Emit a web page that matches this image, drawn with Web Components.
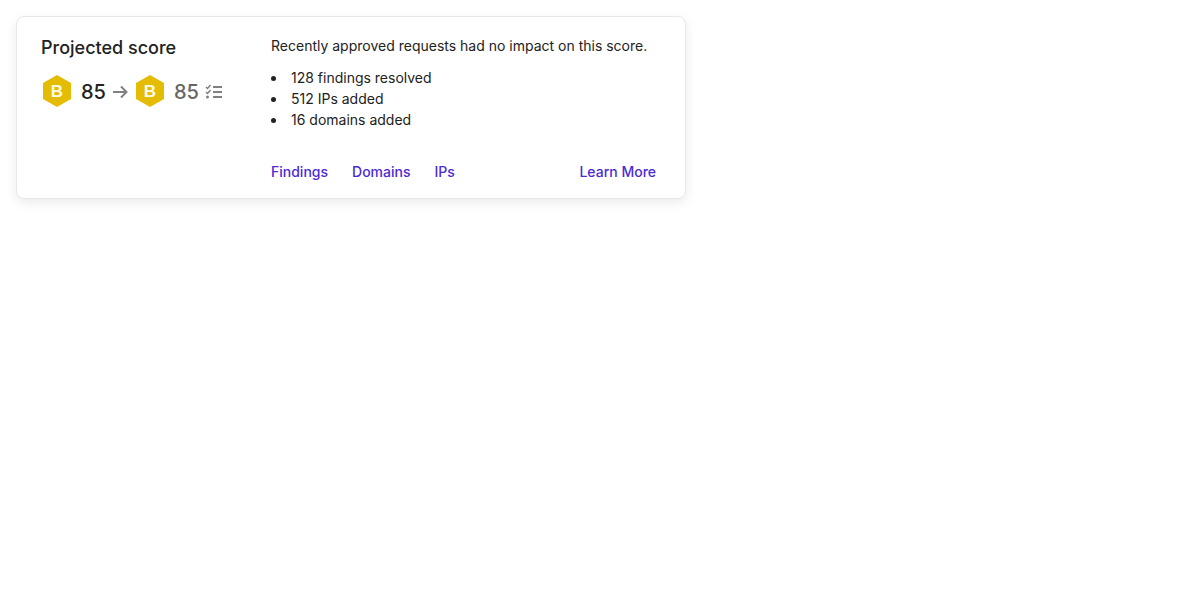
<!DOCTYPE html>
<html lang="en">
<head>
<meta charset="utf-8">
<title>Projected score</title>
<style>
body{margin:0;padding:16px;background:#fff;font-family:Inter,"Liberation Sans",sans-serif;color:#222}
</style>
</head>
<body>
<score-card>
  <span slot="title">Projected score</span>
  <score-grade slot="scores" grade="B">85</score-grade>
  <ui-icon slot="scores" name="arrow"></ui-icon>
  <score-grade slot="scores" grade="B" muted>85</score-grade>
  <ui-icon slot="scores" name="checklist"></ui-icon>
  <impact-summary>
    <span slot="lead">Recently approved requests had no impact on this score.</span>
  </impact-summary>
  <card-link slot="links" href="#findings">Findings</card-link>
  <card-link slot="links" href="#domains">Domains</card-link>
  <card-link slot="links" href="#ips">IPs</card-link>
  <card-link slot="more" href="#learn-more">Learn More</card-link>
</score-card>
<script>
const define = (name, html, setup) => customElements.define(name, class extends HTMLElement {
  constructor() {
    super();
    const root = this.attachShadow({ mode: 'open' });
    root.innerHTML = html;
  }
  connectedCallback() { if (setup) setup(this, this.shadowRoot); }
});

define('score-card', `<style>
:host{display:block;box-sizing:border-box;max-width:670px;border:1px solid #e8e8e8;border-radius:8px;background:#fff;box-shadow:0 4px 12px rgba(0,0,0,.08)}
.layout{display:grid;grid-template-columns:206px 1fr;column-gap:24px;padding:20px 24px 16px}
h2{margin:0;font-size:18px;line-height:22px;font-weight:500}
.scores{display:flex;align-items:center;gap:4px;margin-top:16px}
.body{min-width:0}
footer{display:flex;gap:24px;margin-top:32px;padding-right:5px}
.more{margin-left:auto}
</style>
<section class="layout">
<div><h2><slot name="title"></slot></h2><div class="scores"><slot name="scores"></slot></div></div>
<div class="body"><slot></slot><footer><slot name="links"></slot><span class="more"><slot name="more"></slot></span></footer></div>
</section>`);

define('score-grade', `<style>
:host{display:flex;align-items:center;gap:8px;font-size:20px;line-height:24px;font-weight:500}
:host([muted]) .value{color:#666}
.value{padding-top:2px}
svg{display:block;width:32px;height:32px}
text{font:700 17px "Liberation Sans",Arial,sans-serif;fill:#fffbe6;text-anchor:middle}
</style>
<svg viewBox="0 0 32 32"><path d="M16 0 30 8V24L16 32 2 24V8Z" fill="#e5bc04"/><text x="16" y="22"></text></svg>
<span class="value"><slot></slot></span>`, (el, root) => {
  root.querySelector('text').textContent = el.getAttribute('grade');
});

define('ui-icon', `<style>
:host{display:block;padding-top:2px;color:#808080}
svg{display:block;width:20px;height:20px;fill:none;stroke:currentColor;stroke-width:2}
</style><svg viewBox="0 0 20 20" aria-hidden="true"></svg>`, (el, root) => {
  root.querySelector('svg').innerHTML = {
    arrow: '<path d="M3 10H16M11 4.500 16.500 10 11 15.500"/>',
    checklist: '<path d="M10 5H19M10 10H19M10 15H19"/><path d="M3 5 4.500 6.500 7.500 3M3 10 4.500 11.500 7.500 8" stroke-width="1.500"/><circle cx="4.500" cy="15" r="1.500" fill="currentColor" stroke="none"/>'
  }[el.getAttribute('name')];
});

define('impact-summary', `<style>
:host{display:block;font-size:14px;line-height:21px}
p{margin:0 0 12px;line-height:18px}
ul{margin:0;padding:0;list-style-position:inside}
</style>
<p><slot name="lead"></slot></p>
<ul><li>128 findings resolved</li><li>512 IPs added</li><li>16 domains added</li></ul>`);

define('card-link', `<style>
:host{display:block;font-size:14px;line-height:20px;font-weight:500}
a{color:#4c2bd4;text-decoration:none}
</style><a><slot></slot></a>`, (el, root) => {
  root.querySelector('a').href = el.getAttribute('href');
});
</script>
</body>
</html>
